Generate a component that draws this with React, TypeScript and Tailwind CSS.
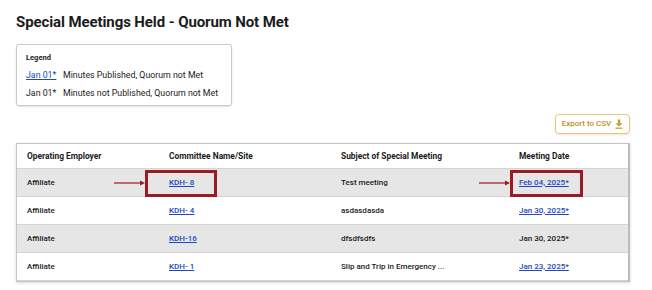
import React from "react";

type Row = {
  employer: string;
  site: string;
  subject: string;
  date: string;
  dateLinked: boolean;
  highlight?: boolean;
};

const rows: Row[] = [
  { employer: "Affiliate", site: "KDH- 8", subject: "Test meeting", date: "Feb 04, 2025*", dateLinked: true, highlight: true },
  { employer: "Affiliate", site: "KDH- 4", subject: "asdasdasda", date: "Jan 30, 2025*", dateLinked: true },
  { employer: "Affiliate", site: "KDH-16", subject: "dfsdfsdfs", date: "Jan 30, 2025*", dateLinked: false },
  { employer: "Affiliate", site: "KDH- 1", subject: "Slip and Trip in Emergency ...", date: "Jan 23, 2025*", dateLinked: true },
];

function Arrow({ width }: { width: number }) {
  return (
    <svg width={width} height="6" viewBox={`0 0 ${width} 6`} className="block">
      <line x1="0" y1="3" x2={width - 4} y2="3" stroke="#9b1b22" strokeWidth="1.2" />
      <polygon points={`${width - 5},0.5 ${width},3 ${width - 5},5.5`} fill="#9b1b22" />
    </svg>
  );
}

function DownloadIcon() {
  return (
    <svg width="8" height="10" viewBox="0 0 8 10" className="block">
      <rect x="2.8" y="0.5" width="2.4" height="4" fill="#c49a2c" />
      <polygon points="0.5,4.2 7.5,4.2 4,7.6" fill="#c49a2c" />
      <rect x="0.5" y="8.6" width="7" height="1.2" fill="#c49a2c" />
    </svg>
  );
}

export default function App() {
  return (
    <div
      className="w-[652px] h-[290px] bg-white overflow-hidden pl-4 pr-[22px] pt-[12px] text-[#1b1b1b]"
      style={{ fontFamily: "Roboto, 'Liberation Sans', sans-serif" }}
    >
      <h1 className="text-[15px] font-bold leading-5 tracking-[-0.1px]">Special Meetings Held - Quorum Not Met</h1>

      <div className="mt-[12px] w-[216px] h-[62px] rounded-[3px] border border-[#c9c9c9] shadow-[0_1px_2px_rgba(0,0,0,0.12)] pl-[9px] pt-[7px] text-[8.8px]">
        <div className="font-bold text-[7.5px] leading-3">Legend</div>
        <div className="mt-[4px] flex items-center leading-[14px]">
          <a className="w-[37px] text-[#2147c0] underline">Jan 01*</a>
          <span>Minutes Published, Quorum not Met</span>
        </div>
        <div className="mt-[4px] flex items-center leading-[14px]">
          <span className="w-[37px]">Jan 01*</span>
          <span>Minutes not Published, Quorum not Met</span>
        </div>
      </div>

      <div className="mt-[8px] flex justify-end">
        <button className="h-5 w-[75px] rounded-[4px] border border-[#e2c878] flex items-center justify-center gap-[4px] text-[8px] font-medium text-[#b8902a] shadow-[0_1px_2px_rgba(200,160,60,0.25)]">
          Export to CSV
          <DownloadIcon />
        </button>
      </div>

      <div className="mt-[9px] border border-[#c4c4c4] border-r-2 border-r-[#bdbdbd] shadow-[0_1px_3px_rgba(0,0,0,0.15)]">
        <div className="grid grid-cols-[142px_172px_178px_1fr] h-[25px] items-center text-[8.4px] font-bold border-b border-[#d4d4d4]">
          <div className="pl-[10px]">Operating Employer</div>
          <div className="pl-[10px]">Committee Name/Site</div>
          <div className="pl-[10px]">Subject of Special Meeting</div>
          <div className="pl-[10px]">Meeting Date</div>
        </div>
        {rows.map((r, i) => (
          <div
            key={r.site}
            className={`grid grid-cols-[142px_172px_178px_1fr] h-[28px] items-center text-[8px] font-medium border-b border-[#d4d4d4] ${
              i % 2 === 0 ? "bg-[#e6e6e6]" : "bg-white"
            }`}
          >
            <div className="pl-[10px]">{r.employer}</div>
            <div className="pl-[10px] relative h-full flex items-center">
              {r.highlight && (
                <>
                  <div className="absolute left-[-45px] top-[11px]">
                    <Arrow width={31} />
                  </div>
                  <div className="absolute left-[-14px] top-[1px] w-[72px] h-[27px] border-[3px] border-[#9b1b22]" />
                </>
              )}
              <a className="text-[#2147c0] underline relative">{r.site}</a>
            </div>
            <div className="pl-[10px]">{r.subject}</div>
            <div className="pl-[10px] relative h-full flex items-center">
              {r.highlight && (
                <>
                  <div className="absolute left-[-30px] top-[11px]">
                    <Arrow width={31} />
                  </div>
                  <div className="absolute left-[1px] top-[1px] w-[73px] h-[27px] border-[3px] border-[#9b1b22]" />
                </>
              )}
              {r.dateLinked ? (
                <a className="text-[#2147c0] underline relative">{r.date}</a>
              ) : (
                <span>{r.date}</span>
              )}
            </div>
          </div>
        ))}
      </div>
    </div>
  );
}
